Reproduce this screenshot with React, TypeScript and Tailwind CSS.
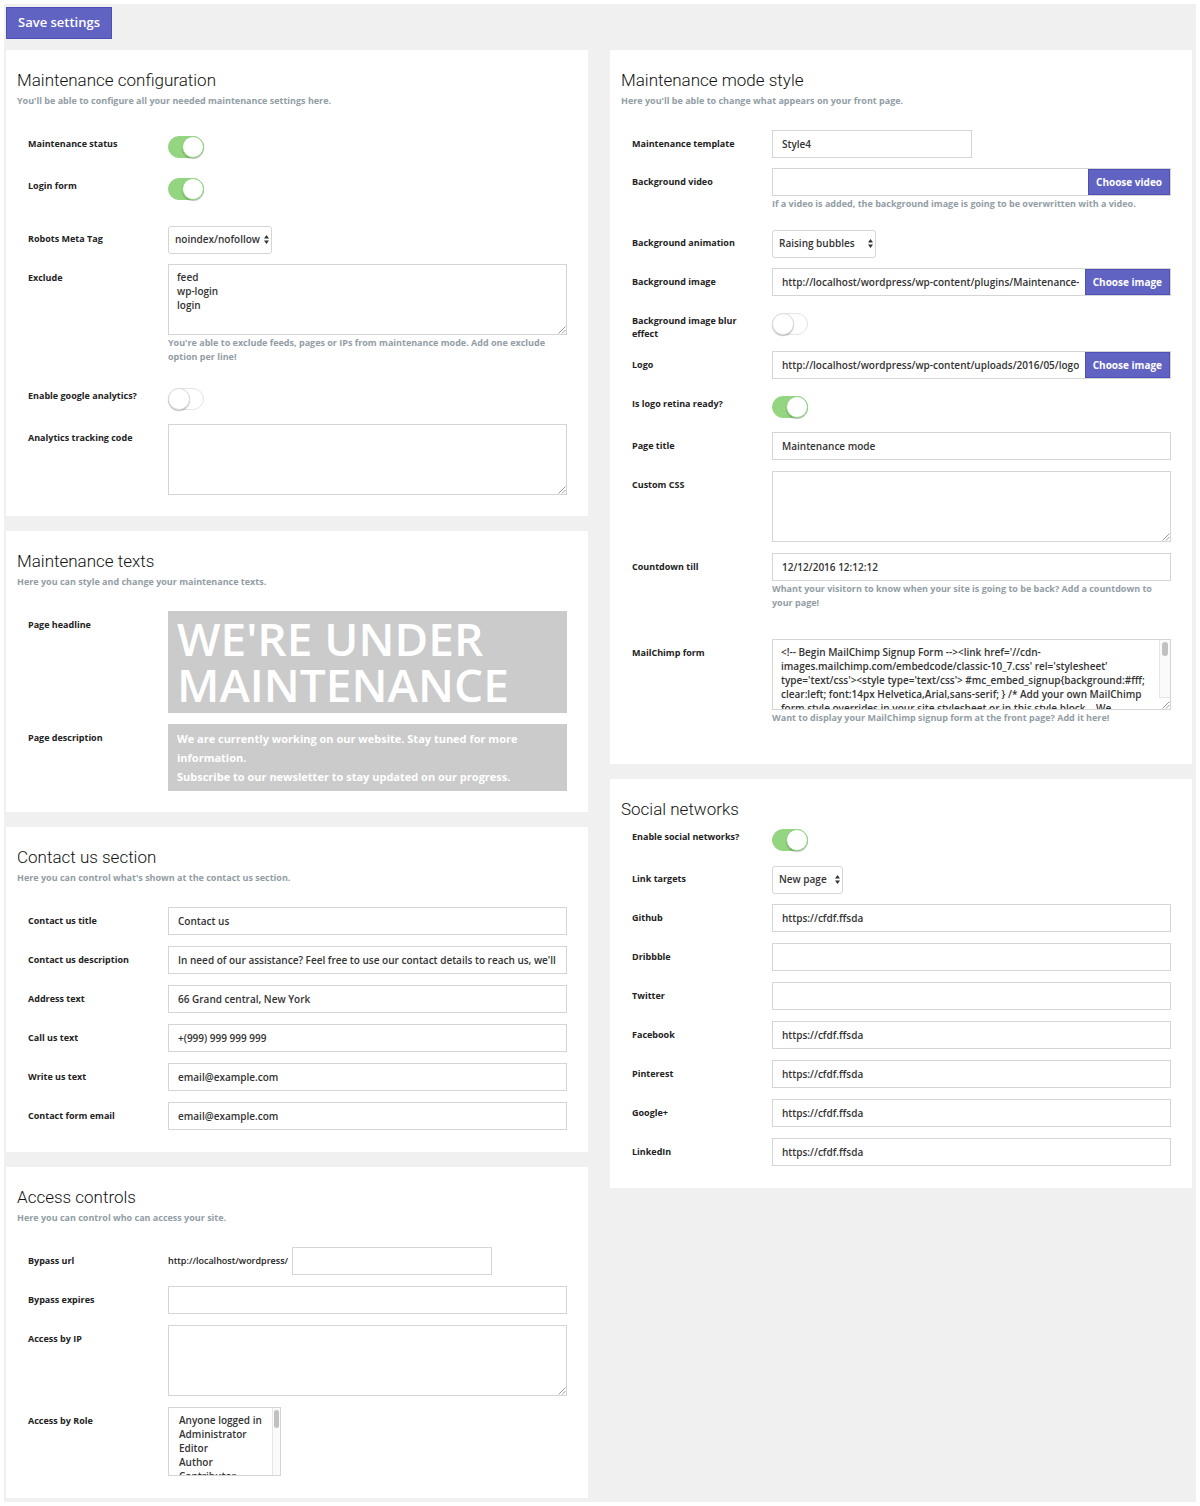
import { useId } from 'react';
import type { ReactNode } from 'react';

const field =
  'block h-7 w-full min-w-0 border border-[#d5d5d5] bg-white px-[9px] text-[10px] font-semibold text-[#333] outline-none focus:border-[#5f5fc4]';
const area =
  'block h-[71px] w-full resize-y border border-[#d5d5d5] bg-white px-2 py-[5px] text-[10px] leading-[14px] font-semibold text-[#333] outline-none focus:border-[#5f5fc4] [scrollbar-width:none]';

function Panel({ title, subtitle, bottom = 'pb-[21px]', children }: {
  title: string;
  subtitle?: string;
  bottom?: string;
  children: ReactNode;
}) {
  return (
    <section className={`bg-white pt-5 pr-[21px] pl-[11px] ${bottom}`}>
      <h2 className="font-[Roboto,sans-serif] text-[17px] leading-5 font-light text-[#111]">{title}</h2>
      {subtitle ? (
        <p className="mt-1 mb-[22px] text-[9px] leading-[14px] font-bold text-[#929da5]">{subtitle}</p>
      ) : (
        <div className="h-1" />
      )}
      <div className="pl-[11px]">{children}</div>
    </section>
  );
}

function Row({ label, hint, gap = 'mb-[11px]', children }: {
  label: string;
  hint?: string;
  gap?: string;
  children: (id: string) => ReactNode;
}) {
  const id = useId();
  return (
    <div className={`flex items-start last:mb-0 ${gap}`}>
      <label htmlFor={id} className="w-[140px] shrink-0 pt-[7px] pr-5 text-[9px] leading-[13px] font-bold text-[#222]">
        {label}
      </label>
      <div className="min-w-0 flex-1">
        {children(id)}
        {hint && <p className="pt-px text-[9px] leading-[14px] font-bold text-[#929da5]">{hint}</p>}
      </div>
    </div>
  );
}

function TextRow({ label, value = '', hint, gap }: { label: string; value?: string; hint?: string; gap?: string }) {
  return (
    <Row label={label} hint={hint} gap={gap}>
      {(id) => <input id={id} type="text" defaultValue={value} className={field} />}
    </Row>
  );
}

function AreaRow({ label, value = '', hint, gap, scrolls = false }: {
  label: string;
  value?: string;
  hint?: string;
  gap?: string;
  scrolls?: boolean;
}) {
  return (
    <Row label={label} hint={hint} gap={gap}>
      {(id) => (
        <div className="relative">
          <textarea id={id} defaultValue={value} className={`${area} ${scrolls ? 'pr-5' : ''}`} />
          {scrolls && (
            <div aria-hidden className="pointer-events-none absolute top-px right-px bottom-3 w-[11px] border-b border-l border-[#e6e6e6] bg-[#fafafa] px-[2px] pt-[2px]">
              <div className="h-[14px] w-[6px] rounded-full bg-[#c1c1c1]" />
            </div>
          )}
          <svg aria-hidden viewBox="0 0 10 10" className="pointer-events-none absolute right-px bottom-px size-[10px] bg-white stroke-[#999]">
            <path d="M2.5 9.5l7-7M6 9.5l3.5-3.5" fill="none" />
          </svg>
        </div>
      )}
    </Row>
  );
}

function ToggleRow({ label, on = false, gap }: { label: string; on?: boolean; gap?: string }) {
  return (
    <Row label={label} gap={gap}>
      {(id) => (
        <div className="flex h-[31px] items-start pt-[6px]">
          <input
            id={id}
            type="checkbox"
            defaultChecked={on}
            className="h-[22px] w-9 cursor-pointer appearance-none rounded-full border border-[#e4e4e4] bg-white before:-mt-px before:-ml-px before:block before:size-[22px] before:rounded-full before:border before:border-[#ddd] before:bg-white before:shadow-[0_1px_1px_rgba(0,0,0,0.25)] checked:border-[#94d582] checked:bg-[#94d582] checked:before:ml-[13px] checked:before:border-[#94d582]"
          />
        </div>
      )}
    </Row>
  );
}

function SelectRow({ label, options, width }: { label: string; options: string[]; width: string }) {
  return (
    <Row label={label}>
      {(id) => (
        <div className={`relative h-7 ${width}`}>
          <select
            id={id}
            className="h-7 w-full appearance-none rounded-[3px] border border-[#d5d5d5] bg-white pl-[6px] text-[10px] font-semibold text-[#333] outline-none"
          >
            {options.map((option) => (
              <option key={option}>{option}</option>
            ))}
          </select>
          <svg viewBox="0 0 5 9" className="pointer-events-none absolute top-[10px] right-[3px] h-[9px] w-[5px] fill-[#333]">
            <path d="M2.5 0 5 3.5H0ZM2.5 9 0 5.5h5Z" />
          </svg>
        </div>
      )}
    </Row>
  );
}

function PickerRow({ label, value = '', button, hint, gap }: {
  label: string;
  value?: string;
  button: string;
  hint?: string;
  gap?: string;
}) {
  return (
    <Row label={label} hint={hint} gap={gap}>
      {(id) => (
        <div className="flex h-7 border border-[#d5d5d5] bg-white">
          <input
            id={id}
            type="text"
            defaultValue={value}
            className="mr-[6px] min-w-0 flex-1 bg-white pl-[9px] text-[10px] font-semibold text-[#333] outline-none"
          />
          <button type="button" className="shrink-0 border border-[#4f4fb8] bg-[#6163c3] px-[7px] text-[10px] font-bold text-white">
            {button}
          </button>
        </div>
      )}
    </Row>
  );
}

const mailChimp =
  "<!-- Begin MailChimp Signup Form --><link href='//cdn-images.mailchimp.com/embedcode/classic-10_7.css' rel='stylesheet' type='text/css'><style type='text/css'> #mc_embed_signup{background:#fff; clear:left; font:14px Helvetica,Arial,sans-serif; } /* Add your own MailChimp form style overrides in your site stylesheet or in this style block.   We recommend moving this block and the preceding CSS link to the HEAD of your HTML file. */ </style>";

const contactFields = [
  ['Contact us title', 'Contact us'],
  ['Contact us description', "In need of our assistance? Feel free to use our contact details to reach us, we'll be happy to help."],
  ['Address text', '66 Grand central, New York'],
  ['Call us text', '+(999) 999 999 999'],
  ['Write us text', 'email@example.com'],
  ['Contact form email', 'email@example.com'],
];

const socialFields = [
  ['Github', 'https://cfdf.ffsda'],
  ['Dribbble', ''],
  ['Twitter', ''],
  ['Facebook', 'https://cfdf.ffsda'],
  ['Pinterest', 'https://cfdf.ffsda'],
  ['Google+', 'https://cfdf.ffsda'],
  ['LinkedIn', 'https://cfdf.ffsda'],
];

const roles = ['Anyone logged in', 'Administrator', 'Editor', 'Author', 'Contributor', 'Subscriber'];

export default function App() {
  return (
    <div className="bg-white p-1 font-['Open_Sans',sans-serif]">
      <form className="bg-[#f0f0f0] pt-[3px] pr-1 pb-1 pl-[2px]" onSubmit={(event) => event.preventDefault()}>
        <button type="submit" className="block h-8 border border-[#4f4fb8] bg-[#6163c3] px-[11px] text-[13px] font-semibold text-white">
          Save settings
        </button>

        <div className="mt-[11px] grid grid-cols-2 items-start gap-[22px]">
          <div className="flex min-w-0 flex-col gap-[15px]">
            <Panel title="Maintenance configuration" subtitle="You'll be able to configure all your needed maintenance settings here.">
              <ToggleRow label="Maintenance status" on />
              <ToggleRow label="Login form" on gap="mb-[22px]" />
              <SelectRow label="Robots Meta Tag" options={['noindex/nofollow', 'index/follow']} width="w-[104px]" />
              <AreaRow
                label="Exclude"
                value={'feed\nwp-login\nlogin'}
                hint="You're able to exclude feeds, pages or IPs from maintenance mode. Add one exclude option per line!"
                gap="mb-[18px]"
              />
              <ToggleRow label="Enable google analytics?" />
              <AreaRow label="Analytics tracking code" />
            </Panel>

            <Panel title="Maintenance texts" subtitle="Here you can style and change your maintenance texts.">
              <Row label="Page headline">
                {(id) => (
                  <textarea
                    id={id}
                    defaultValue="WE'RE UNDER MAINTENANCE"
                    className="block h-[102px] w-full resize-none overflow-hidden bg-[#cbcbcb] px-[9px] py-1 text-[46px] leading-[46px] font-semibold text-white outline-none"
                  />
                )}
              </Row>
              <Row label="Page description">
                {(id) => (
                  <textarea
                    id={id}
                    defaultValue={'We are currently working on our website. Stay tuned for more information.\nSubscribe to our newsletter to stay updated on our progress.'}
                    className="block h-[67px] w-full resize-none overflow-hidden bg-[#cbcbcb] px-[9px] py-[5px] text-[11px] leading-[19px] font-bold text-white outline-none"
                  />
                )}
              </Row>
            </Panel>

            <Panel title="Contact us section" subtitle="Here you can control what's shown at the contact us section." bottom="pb-[22px]">
              {contactFields.map(([label, value]) => (
                <TextRow key={label} label={label} value={value} />
              ))}
            </Panel>

            <Panel title="Access controls" subtitle="Here you can control who can access your site." bottom="pb-[22px]">
              <Row label="Bypass url">
                {(id) => (
                  <div className="flex items-center">
                    <span className="w-[124px] text-[9px] font-semibold text-[#222]">http://localhost/wordpress/</span>
                    <div className="w-[200px]">
                      <input id={id} type="text" className={field} />
                    </div>
                  </div>
                )}
              </Row>
              <TextRow label="Bypass expires" />
              <AreaRow label="Access by IP" />
              <Row label="Access by Role">
                {(id) => (
                  <div className="relative w-[113px]">
                    <select
                      id={id}
                      multiple
                      className="block h-[69px] w-full overflow-y-scroll border border-[#d5d5d5] bg-white pt-[5px] pl-2 text-[10px] font-semibold text-[#333] outline-none [scrollbar-width:none]"
                    >
                      {roles.map((role) => (
                        <option key={role} className="min-h-0 px-[2px] py-0 leading-[14px] font-semibold text-[#333]">
                          {role}
                        </option>
                      ))}
                    </select>
                    <div aria-hidden className="pointer-events-none absolute top-px right-px bottom-px w-2 border-l border-[#e6e6e6] bg-[#fafafa] pt-[2px] pl-px">
                      <div className="h-[18px] w-[5px] rounded-full bg-[#c1c1c1]" />
                    </div>
                  </div>
                )}
              </Row>
            </Panel>
          </div>

          <div className="flex min-w-0 flex-col gap-[15px]">
            <Panel title="Maintenance mode style" subtitle="Here you'll be able to change what appears on your front page." bottom="pb-[39px]">
              <Row label="Maintenance template" gap="mb-[10px]">
                {(id) => (
                  <div className="w-[200px]">
                    <input id={id} type="text" defaultValue="Style4" className={field} />
                  </div>
                )}
              </Row>
              <PickerRow
                label="Background video"
                button="Choose video"
                hint="If a video is added, the background image is going to be overwritten with a video."
                gap="mb-[18px]"
              />
              <SelectRow label="Background animation" options={['Raising bubbles', 'None']} width="w-[104px]" />
              <PickerRow
                label="Background image"
                value="http://localhost/wordpress/wp-content/plugins/Maintenance-mode/img/background.jpg"
                button="Choose image"
              />
              <ToggleRow label="Background image blur effect" />
              <PickerRow
                label="Logo"
                value="http://localhost/wordpress/wp-content/uploads/2016/05/logo.png"
                button="Choose image"
              />
              <ToggleRow label="Is logo retina ready?" on />
              <TextRow label="Page title" value="Maintenance mode" />
              <AreaRow label="Custom CSS" />
              <TextRow
                label="Countdown till"
                value="12/12/2016 12:12:12"
                hint="Whant your visitorn to know when your site is going to be back? Add a countdown to your page!"
                gap="mb-[29px]"
              />
              <AreaRow
                label="MailChimp form"
                value={mailChimp}
                hint="Want to display your MailChimp signup form at the front page? Add it here!"
                scrolls
              />
            </Panel>

            <Panel title="Social networks" bottom="pb-[22px]">
              <ToggleRow label="Enable social networks?" on />
              <SelectRow label="Link targets" options={['New page', 'Same page']} width="w-[71px]" />
              {socialFields.map(([label, value]) => (
                <TextRow key={label} label={label} value={value} />
              ))}
            </Panel>
          </div>
        </div>
      </form>
    </div>
  );
}
